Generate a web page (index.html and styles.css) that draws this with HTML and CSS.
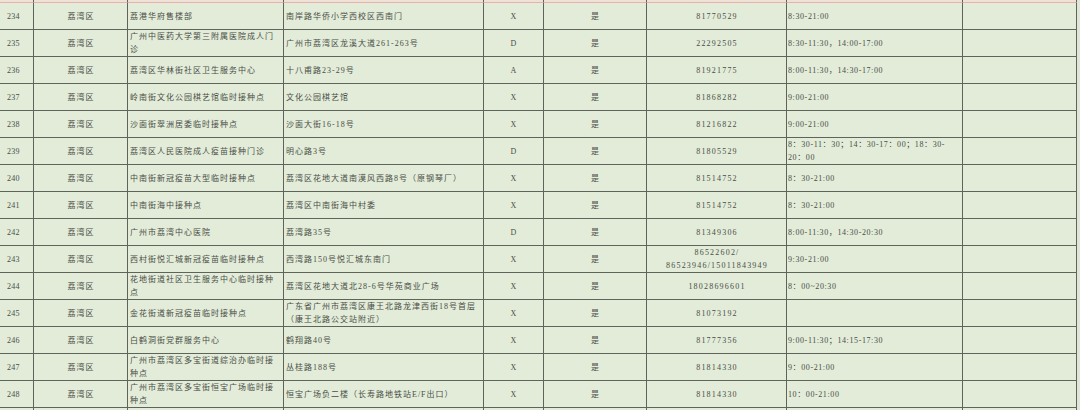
FILE: index.html
```html
<!DOCTYPE html>
<html lang="zh-CN">
<head>
<meta charset="utf-8">
<title>荔湾区接种点</title>
<link rel="stylesheet" href="styles.css">
</head>
<body>
<table class="sheet">
<colgroup>
<col class="w1"><col class="w2"><col class="w3"><col class="w4"><col class="w5"><col class="w6"><col class="w7"><col class="w8"><col class="w9">
</colgroup>
<tbody>
<tr class="stub"><td></td><td></td><td></td><td></td><td></td><td></td><td></td><td></td><td></td></tr>
<tr><td class="no">234</td><td class="c">荔湾区</td><td class="l">荔港华府售楼部</td><td class="l">南岸路华侨小学西校区西南门</td><td class="c">X</td><td class="c">是</td><td class="c ph">81770529</td><td class="l t">8:30-21:00</td><td></td></tr>
<tr><td class="no">235</td><td class="c">荔湾区</td><td class="l">广州中医药大学第三附属医院成人门<br>诊</td><td class="l">广州市荔湾区龙溪大道261-263号</td><td class="c">D</td><td class="c">是</td><td class="c ph">22292505</td><td class="l t">8:30-11:30，14:00-17:00</td><td></td></tr>
<tr><td class="no">236</td><td class="c">荔湾区</td><td class="l">荔湾区华林街社区卫生服务中心</td><td class="l">十八甫路23-29号</td><td class="c">A</td><td class="c">是</td><td class="c ph">81921775</td><td class="l t">8:00-11:30，14:30-17:00</td><td></td></tr>
<tr><td class="no">237</td><td class="c">荔湾区</td><td class="l">岭南街文化公园棋艺馆临时接种点</td><td class="l">文化公园棋艺馆</td><td class="c">X</td><td class="c">是</td><td class="c ph">81868282</td><td class="l t">9:00-21:00</td><td></td></tr>
<tr><td class="no">238</td><td class="c">荔湾区</td><td class="l">沙面街翠洲居委临时接种点</td><td class="l">沙面大街16-18号</td><td class="c">X</td><td class="c">是</td><td class="c ph">81216822</td><td class="l t">9:00-21:00</td><td></td></tr>
<tr><td class="no">239</td><td class="c">荔湾区</td><td class="l">荔湾区人民医院成人疫苗接种门诊</td><td class="l">明心路3号</td><td class="c">D</td><td class="c">是</td><td class="c ph">81805529</td><td class="l t">8：30-11：30；14：30-17：00；18：30-<br>20：00</td><td></td></tr>
<tr><td class="no">240</td><td class="c">荔湾区</td><td class="l">中南街新冠疫苗大型临时接种点</td><td class="l">荔湾区花地大道南漠风西路8号（原钢琴厂）</td><td class="c">X</td><td class="c">是</td><td class="c ph">81514752</td><td class="l t">8：30-21:00</td><td></td></tr>
<tr><td class="no">241</td><td class="c">荔湾区</td><td class="l">中南街海中接种点</td><td class="l">荔湾区中南街海中村委</td><td class="c">X</td><td class="c">是</td><td class="c ph">81514752</td><td class="l t">8：30-21:00</td><td></td></tr>
<tr><td class="no">242</td><td class="c">荔湾区</td><td class="l">广州市荔湾中心医院</td><td class="l">荔湾路35号</td><td class="c">D</td><td class="c">是</td><td class="c ph">81349306</td><td class="l t">8:00-11:30，14:30-20:30</td><td></td></tr>
<tr><td class="no">243</td><td class="c">荔湾区</td><td class="l">西村街悦汇城新冠疫苗临时接种点</td><td class="l">西湾路150号悦汇城东南门</td><td class="c">X</td><td class="c">是</td><td class="c ph">86522602/<br>86523946/15011843949</td><td class="l t">9:30-21:00</td><td></td></tr>
<tr><td class="no">244</td><td class="c">荔湾区</td><td class="l">花地街道社区卫生服务中心临时接种<br>点</td><td class="l">荔湾区花地大道北28-6号华苑商业广场</td><td class="c">X</td><td class="c">是</td><td class="c ph">18028696601</td><td class="l t">8：00~20:30</td><td></td></tr>
<tr><td class="no">245</td><td class="c">荔湾区</td><td class="l">金花街道新冠疫苗临时接种点</td><td class="l">广东省广州市荔湾区康王北路龙津西街18号首层<br>（康王北路公交站附近）</td><td class="c">X</td><td class="c">是</td><td class="c ph">81073192</td><td class="l t"></td><td></td></tr>
<tr><td class="no">246</td><td class="c">荔湾区</td><td class="l">白鹤洞街党群服务中心</td><td class="l">鹤翔路40号</td><td class="c">X</td><td class="c">是</td><td class="c ph">81777356</td><td class="l t">9:00-11:30；14:15-17:30</td><td></td></tr>
<tr><td class="no">247</td><td class="c">荔湾区</td><td class="l">广州市荔湾区多宝街道综治办临时接<br>种点</td><td class="l">丛桂路188号</td><td class="c">X</td><td class="c">是</td><td class="c ph">81814330</td><td class="l t">9：00-21:00</td><td></td></tr>
<tr><td class="no">248</td><td class="c">荔湾区</td><td class="l">广州市荔湾区多宝街恒宝广场临时接<br>种点</td><td class="l">恒宝广场负二楼（长寿路地铁站E/F出口）</td><td class="c">X</td><td class="c">是</td><td class="c ph">81814330</td><td class="l t">10：00-21:00</td><td></td></tr>
<tr class="tail"><td></td><td></td><td></td><td></td><td></td><td></td><td></td><td></td><td></td></tr>
</tbody>
</table>
</body>
</html>
```

FILE: styles.css
```css
html, body {
  margin: 0;
  padding: 0;
  background: #dfe6d8;
  overflow: hidden;
  height: 410px;
}

.sheet {
  table-layout: fixed;
  width: 1077px;
  border-collapse: separate;
  border-spacing: 0;
  background: #e2ecd9;
  font-family: "Liberation Serif", "Noto Sans CJK SC", serif;
  font-size: 8px;
  letter-spacing: 1px;
  color: #4a4d46;
}

.w1 { width: 34px; }
.w2 { width: 94px; }
.w3 { width: 156px; }
.w4 { width: 200px; }
.w5 { width: 60px; }
.w6 { width: 103px; }
.w7 { width: 140px; }
.w8 { width: 176px; }
.w9 { width: 114px; }

.sheet td {
  box-sizing: border-box;
  height: 27px;
  padding: 0 1px 0 2px;
  border-right: 1px solid #5f645b;
  border-bottom: 1px solid #5f645b;
  white-space: nowrap;
  overflow: hidden;
  line-height: 13px;
  vertical-align: middle;
}

.sheet .stub td {
  height: 3px;
  background: #f1e0d8;
  border-bottom-color: #e4b4aa;
}

.sheet .tail td {
  height: 12px;
  border-bottom: none;
}

.sheet td.no {
  padding-left: 7px;
  letter-spacing: 0.3px;
}

.sheet td.c {
  text-align: center;
}

.sheet td.l {
  text-align: left;
}

.sheet td.ph {
  letter-spacing: 1.2px;
}

.sheet td.t {
  padding-left: 1px;
  letter-spacing: 0.6px;
}
```
